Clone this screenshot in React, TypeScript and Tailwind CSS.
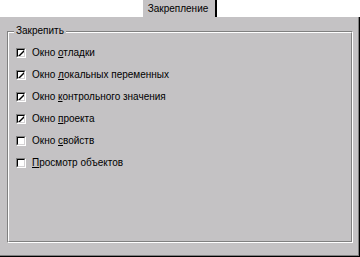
const items = [
  { pre: "Окно ", key: "о", post: "тладки", checked: true },
  { pre: "Окно ", key: "л", post: "окальных переменных", checked: true },
  { pre: "Окно ", key: "к", post: "онтрольного значения", checked: true },
  { pre: "Окно ", key: "п", post: "роекта", checked: true },
  { pre: "Окно ", key: "с", post: "войств", checked: false },
  { pre: "", key: "П", post: "росмотр объектов", checked: false },
];

function CheckBox({ checked }: { checked: boolean }) {
  return (
    <div className="w-[10px] h-[10px] border-t border-l border-[#808080] border-r border-b border-r-white border-b-white">
      <div className="w-full h-full bg-white border-t border-l border-black border-r border-b border-r-[#d4d2d4] border-b-[#d4d2d4] flex items-center justify-center">
        {checked && (
          <svg width="6" height="6" viewBox="0 0 6 6">
            <polygon points="0,6 6,0 6,2 2,6" fill="#000" />
          </svg>
        )}
      </div>
    </div>
  );
}

export default function App() {
  return (
    <div
      className="w-[360px] h-[257px] bg-white flex flex-col text-[10px] text-black"
      style={{ fontFamily: '"Liberation Sans", Arial, sans-serif' }}
    >
      <div className="h-[17px] flex pl-[143px]">
        <div className="w-[74px] bg-[#c4c2c4] border-r-2 border-black flex items-center justify-center pr-[2px]">
          Закрепление
        </div>
      </div>
      <div className="flex-1 border-r border-b border-black">
        <div className="h-full bg-[#c4c2c4] border-r border-b border-[#808080] pt-[14px] pl-[7px] pr-[4px]">
          <div className="relative w-[346px] h-[212px] border-t border-l border-[#808080] border-r border-b border-r-white border-b-white">
            <div className="h-full border-t border-l border-white border-r border-b border-r-[#808080] border-b-[#808080] pt-[9px] pl-[7px]">
              {items.map((it) => (
                <div key={it.post} className="h-[22px] flex items-center gap-[6px]">
                  <CheckBox checked={it.checked} />
                  <span className="whitespace-pre leading-none">
                    {it.pre}
                    <u className="underline-offset-1">{it.key}</u>
                    {it.post}
                  </span>
                </div>
              ))}
            </div>
            <span className="absolute left-[6px] top-[-7px] bg-[#c4c2c4] px-[2px] leading-[12px]">
              Закрепить
            </span>
          </div>
        </div>
      </div>
    </div>
  );
}
